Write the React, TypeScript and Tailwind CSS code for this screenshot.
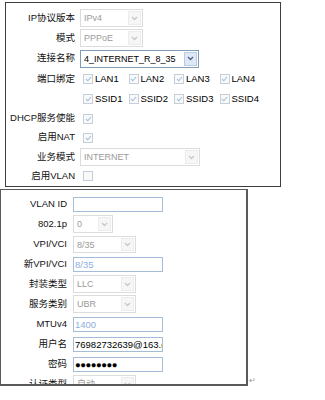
import React from 'react';

const font = 'font-["Liberation_Sans","Noto_Sans_CJK_SC",sans-serif]';

function Chevron({ dark }: { dark?: boolean }) {
  return (
    <svg width="7" height="5" viewBox="0 0 7 5">
      <path d="M1 1 L3.5 3.5 L6 1" fill="none" stroke={dark ? '#4d6185' : '#c4c8cc'} strokeWidth="1.3" />
    </svg>
  );
}

function Select({ width, value, enabled, height = 'h-[18px]' }: { width: string; value: string; enabled?: boolean; height?: string }) {
  return (
    <div
      className={`flex ${width} ${height} items-stretch border bg-white ${
        enabled ? 'border-[#7f9db9]' : 'border-[#dcdcdc]'
      }`}
    >
      <span
        className={`flex-1 overflow-hidden whitespace-nowrap pl-[3px] text-[9px] leading-[16px] ${
          enabled ? 'text-black' : 'text-[#9a9a9a]'
        }`}
      >
        {value}
      </span>
      <span
        className={`m-[1px] flex w-[13px] items-center justify-center border ${
          enabled ? 'border-[#b9cbe3] bg-[#dfe8f6]' : 'border-[#ececec] bg-[#f6f6f6]'
        }`}
      >
        <Chevron dark={enabled} />
      </span>
    </div>
  );
}

function Input({ value, tone = 'text-black', width = 'w-[90px]' }: { value?: string; tone?: string; width?: string }) {
  return (
    <div className={`${width} h-[15px] overflow-hidden whitespace-nowrap border border-[#a5bcd8] bg-white pl-[1px] text-[9.5px] leading-[13px] ${tone}`}>
      {value}
    </div>
  );
}

function Check({ checked = true }: { checked?: boolean }) {
  return (
    <span className="flex h-[10px] w-[10px] shrink-0 items-center justify-center border border-[#c6cfd9] bg-[#f7f9fb]">
      {checked && (
        <svg width="7" height="6" viewBox="0 0 7 6">
          <path d="M1 3 L2.8 4.8 L6 1" fill="none" stroke="#a9bed6" strokeWidth="1.1" />
        </svg>
      )}
    </span>
  );
}

function CheckItem({ label }: { label: string }) {
  return (
    <span className="flex w-[45.5px] items-center gap-[2px]">
      <Check />
      <span className="text-[9.5px] text-black">{label}</span>
    </span>
  );
}

function TopRow({ label, h = 'h-[20px]', children }: { label: string; h?: string; children?: React.ReactNode }) {
  return (
    <div className={`flex ${h} items-center`}>
      <span className="w-[69px] whitespace-nowrap text-right text-[9.5px] text-[#111]">{label}</span>
      <div className="ml-[5px] flex items-center">{children}</div>
    </div>
  );
}

function BottomRow({ label, children }: { label: string; children?: React.ReactNode }) {
  return (
    <div className="flex h-[20px] shrink-0 items-center">
      <span className="w-[66px] whitespace-nowrap text-right text-[9.5px] text-[#111]">{label}</span>
      <div className="ml-[6px] flex items-center">{children}</div>
    </div>
  );
}

export default function App() {
  return (
    <div className={`h-[400px] w-[325px] bg-white ${font}`}>
      <div className="ml-[5px] mt-[2px] flex h-[185px] w-[276px] flex-col border border-[#3e3e3e] pt-[5px]">
        <TopRow label="IP协议版本">
          <Select width="w-[63px]" value="IPv4" />
        </TopRow>
        <TopRow label="模式">
          <Select width="w-[63px]" value="PPPoE" />
        </TopRow>
        <TopRow label="连接名称" h="h-[21px]">
          <Select width="w-[119px]" value="4_INTERNET_R_8_35" enabled />
        </TopRow>
        <TopRow label="端口绑定">
          <div className="ml-[3px] flex">
            <CheckItem label="LAN1" />
            <CheckItem label="LAN2" />
            <CheckItem label="LAN3" />
            <CheckItem label="LAN4" />
          </div>
        </TopRow>
        <TopRow label="">
          <div className="ml-[3px] flex">
            <CheckItem label="SSID1" />
            <CheckItem label="SSID2" />
            <CheckItem label="SSID3" />
            <CheckItem label="SSID4" />
          </div>
        </TopRow>
        <TopRow label="DHCP服务使能" h="h-[19px]">
          <span className="ml-[3px]">
            <Check />
          </span>
        </TopRow>
        <TopRow label="启用NAT" h="h-[19px]">
          <span className="ml-[3px]">
            <Check />
          </span>
        </TopRow>
        <TopRow label="业务模式">
          <Select width="w-[120px]" value="INTERNET" />
        </TopRow>
        <TopRow label="启用VLAN" h="h-[18px]">
          <span className="ml-[3px]">
            <Check checked={false} />
          </span>
        </TopRow>
      </div>

      <div className="mt-[2px] flex items-end">
        <div className="flex h-[197px] w-[248px] flex-col overflow-hidden border border-[#5a5a5a] border-r-2 border-b-2 pt-[4px]">
          <BottomRow label="VLAN ID">
            <Input />
          </BottomRow>
          <BottomRow label="802.1p">
            <Select width="w-[40px]" value="0" />
          </BottomRow>
          <BottomRow label="VPI/VCI">
            <Select width="w-[63px]" value="8/35" height="h-[17px]" />
          </BottomRow>
          <BottomRow label="新VPI/VCI">
            <Input value="8/35" tone="text-[#8eaee0]" />
          </BottomRow>
          <BottomRow label="封装类型">
            <Select width="w-[63px]" value="LLC" />
          </BottomRow>
          <BottomRow label="服务类别">
            <Select width="w-[63px]" value="UBR" />
          </BottomRow>
          <BottomRow label="MTUv4">
            <Input value="1400" tone="text-[#8eaee0]" />
          </BottomRow>
          <BottomRow label="用户名">
            <Input value="76982732639@163.gd" />
          </BottomRow>
          <BottomRow label="密码">
            <Input value="●●●●●●●●" tone="text-black text-[8px] tracking-[-0.5px]" />
          </BottomRow>
          <BottomRow label="认证类型">
            <Select width="w-[63px]" value="自动" />
          </BottomRow>
        </div>
        <span className="mb-[1px] ml-[1px] text-[8px] leading-[8px] text-[#9a9a9a]">↵</span>
      </div>
    </div>
  );
}
